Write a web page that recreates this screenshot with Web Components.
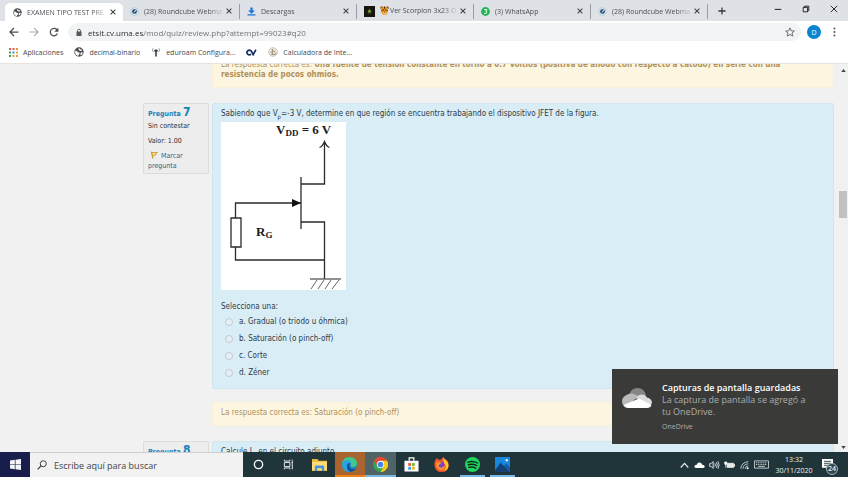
<!DOCTYPE html>
<html lang="es">
<head>
<meta charset="utf-8">
<title>EXAMEN TIPO TEST PRE</title>
<style>
html, body { margin: 0; height: 100%; overflow: hidden; }
body { background: #f1f1f1; }
</style>
</head>
<body>
<desktop-screen></desktop-screen>
<script>
const ICONS = {
  globe: ['0 0 16 16', '<circle cx="8" cy="8" r="7.5" fill="#4b4f54"/><path d="M2 6c2 0 3 1 4 2s3 0 3 2-2 2-2 4c-3 0-6-3-5-8zM8 2c2 0 1 2 3 2s2 1 1 2-3 0-4-1-1-3 0-3zM11 9c2-1 3 0 3 0-1 3-2 4-3 4s-1-3 0-4z" fill="#fff"/>'],
  roundcube: ['0 0 16 16', '<circle cx="8" cy="8" r="7.5" fill="#b9cfe2"/><path d="M8 2l5 3v6l-5 3-5-3V5z" fill="#e9f1f8"/><circle cx="8" cy="8" r="4.2" fill="#17375f"/><path d="M6 9l4-4 1 2-4 3z" fill="#d8e8f5"/>'],
  download: ['0 0 16 16', '<path d="M6 1h4v5h4l-6 6-6-6h4zM1 13h14v2H1z" fill="#1a73d8"/>'],
  film: ['0 0 16 16', '<path d="M0 0h16v16H0z" fill="#15170f"/><path d="M8 4l3 5H5z" fill="#8f9c3b"/><path d="M6 9h4v2H6z" fill="#55662c"/>'],
  tiger: ['0 0 16 16', '<circle cx="3" cy="3" r="2.7" fill="#9b5b1d"/><circle cx="13" cy="3" r="2.7" fill="#9b5b1d"/><path d="M2 4q6-5 12 0v6q-2 6-6 6t-6-6z" fill="#ef9920"/><path d="M7 1h2v4H7zM2 7l3 1-3 1zM14 7l-3 1 3 1z" fill="#44250c"/><circle cx="5.6" cy="7" r="1.1"/><circle cx="10.4" cy="7" r="1.1"/><path d="M6 11h4v2l-2 2-2-2z" fill="#f8d5a0"/><path d="M6.500 10h3L8 12z"/>'],
  whatsapp: ['0 0 16 16', '<circle cx="8" cy="8" r="7.8" fill="#1fb655"/><path d="M5.500 4.500h5L8 7.300q3 0 2.400 2.500-1 2.700-5 1.500" fill="none" stroke="#fff" stroke-width="1.700"/>'],
  close: ['0 0 10 10', '<path d="M1 1l8 8M9 1L1 9" stroke="#3c4043" stroke-width="1.700"/>'],
  plus: ['0 0 10 10', '<path d="M5 .5v9M.5 5h9" stroke="#35383b" stroke-width="1.600"/>'],
  min: ['0 0 10 10', '<path d="M1 5.500h8" stroke="#333" stroke-width="1.400"/>'],
  restore: ['0 0 10 10', '<path d="M1.500 3h5.500v5.500H1.500zM3 3V1.500h5.500V7H7" fill="none" stroke="#222" stroke-width="1.200"/>'],
  wclose: ['0 0 10 10', '<path d="M1 1l8 8M9 1L1 9" stroke="#222" stroke-width="1.200"/>'],
  back: ['0 0 16 16', '<path d="M15 8H2M8 1.500L1.500 8 8 14.500" fill="none" stroke="#4a4d51" stroke-width="2"/>'],
  forward: ['0 0 16 16', '<path d="M1 8h13M8 1.500L14.500 8 8 14.500" fill="none" stroke="#a9adb1" stroke-width="1.800"/>'],
  reload: ['0 0 16 16', '<path d="M13.500 10.500A6 6 0 1 1 12.500 4L14 6" fill="none" stroke="#4a4d51" stroke-width="2"/><path d="M15 1v6.500H8.500z" fill="#4a4d51"/>'],
  lock: ['0 0 12 16', '<path d="M1 6h10v9H1z" fill="#55585c"/><path d="M3 7V4.500a3 3 0 0 1 6 0V7" fill="none" stroke="#55585c" stroke-width="1.700"/>'],
  star: ['0 0 16 16', '<path d="M8 1.500l2 4.600 5 .4-3.800 3.200 1.200 4.800L8 12l-4.400 2.500 1.200-4.800L1 6.500l5-.4z" fill="none" stroke="#5a5e62" stroke-width="1.400"/>'],
  dots: ['0 0 4 16', '<g fill="#55585c"><circle cx="2" cy="2.500" r="1.600"/><circle cx="2" cy="8" r="1.600"/><circle cx="2" cy="13.500" r="1.600"/></g>'],
  apps: ['0 0 9 9', '<path d="M0 0h2v2H0zM3.500 0h2v2h-2z" fill="#e2574c"/><path d="M7 0h2v2H7z" fill="#e8933a"/><path d="M0 3.500h2v2H0z" fill="#3fa45b"/><path d="M3.500 3.500h2v2h-2z" fill="#4285d8"/><path d="M7 3.500h2v2H7zM3.500 7h2v2h-2zM7 7h2v2H7z" fill="#e0a52e"/><path d="M0 7h2v2H0z" fill="#3fa45b"/>'],
  eduroam: ['0 0 16 16', '<path d="M8 5v10M5.500 7q2.500-4 5 0" fill="none" stroke="#3d4145" stroke-width="2.600"/><path d="M3.500 2Q1 5 3.500 8M12.500 2q2.500 3 0 6" fill="none" stroke="#8b98ab" stroke-width="1.500"/>'],
  cv: ['0 0 20 12', '<path d="M9 3A4.200 4.200 0 1 0 9 9" fill="none" stroke="#152f63" stroke-width="3"/><path d="M9 2l4 8 5-9" fill="none" stroke="#152f63" stroke-width="3"/>'],
  calc: ['0 0 16 16', '<circle cx="8" cy="8" r="7" fill="#ece7dd" stroke="#b6ae9f"/><path d="M7 3v9M4 9l5-3 4 5M5 12h7" stroke="#94866d" stroke-width="1.400" fill="none"/>'],
  flag: ['0 0 16 16', '<path d="M2 2q5 1.500 12 1-3 2-3 5-3 1-6 0" fill="#f6e6b2" stroke="#dca52c" stroke-width="2.200"/><path d="M3 2l3 13" stroke="#cf9520" stroke-width="2.400"/>'],
  up: ['0 0 6 4', '<path d="M3 0l3 4H0z" fill="#444"/>'],
  down: ['0 0 6 4', '<path d="M0 0h6L3 4z" fill="#444"/>'],
  cloud: ['0 0 30 20', '<path d="M7 7Q9 0 15.500 0q6.500 0 8.500 7l-7 6z" fill="#868686"/><path d="M6.500 6q5-2 9.500 2.500L4 19.500Q0 17.500 0 13T6.500 6z" fill="#bababa"/><path d="M14 9.500Q16 6.500 20.500 6.500 24 7 25 9.500q5 1 5 5.500l-2 3z" fill="#dcdcdc"/><path d="M1.500 17L17 10.500 29.500 17q-1 3-4.500 3H6q-3 0-4.500-3z" fill="#fff"/>'],
  windows: ['0 0 16 16', '<path d="M0 2.200l7-1v6.300H0zM8 1l8-1v7.500H8zM0 8.500h7v6.300l-7-1zM8 8.500h8V16l-8-1z" fill="#f4f4f8"/>'],
  search: ['0 0 16 16', '<circle cx="10" cy="6" r="4.800" fill="none" stroke="#333" stroke-width="1.500"/><path d="M6.500 9.500L1 15" stroke="#333" stroke-width="1.700"/>'],
  cortana: ['0 0 16 16', '<circle cx="8" cy="8" r="6" fill="none" stroke="#fff" stroke-width="2"/>'],
  taskview: ['0 0 16 16', '<path d="M2 5h8v6H2zM2 1v2h8V1M2 15v-2h8v2M13.500 1v3M13.500 7v8" fill="none" stroke="#e8ecec" stroke-width="1.400"/><path d="M12.500 4.500h2v2h-2z" fill="#fff"/>'],
  folder: ['0 0 16 14', '<path d="M0 1h6l1 2h9v11H0z" fill="#f0b63c"/><path d="M0 4h16v9H0z" fill="#ffdc76"/><path d="M3 9q0-1 1-1h8q1 0 1 1v5h-2.500v-3h-5v3H3z" fill="#4695d4"/>'],
  edge: ['0 0 16 16', '<circle cx="8" cy="8" r="8" fill="#1b7fcb"/><path d="M0 7Q1 0 8 0q7.500 0 8 7 0 4-4.500 4-3 0-2-2.500Q10 5 6.500 4.500 2 4 0 7z" fill="#43c78c"/><path d="M0 8q1-5 6-4.500Q10 4 9.800 7 7 5.500 5.500 8.500 4.500 13 9 16 0 16 0 8z" fill="#2aa5dc"/><path d="M5.500 8.500Q4.500 14 9 15.800q3.500 0 6-3.300-6 2-7-2Q7 8 8.500 6.500 6 6 5.500 8.500z" fill="#124f92"/>'],
  chrome: ['0 0 16 16', '<circle cx="8" cy="8" r="8" fill="#35a453"/><path d="M1 4a8 8 0 0 1 14 0H8L5 10z" fill="#e94537"/><path d="M15 4a8 8 0 0 1-7 12l3.500-6L9 4z" fill="#fac81c"/><circle cx="8" cy="8" r="3.900" fill="#fff"/><circle cx="8" cy="8" r="3" fill="#4285e8"/>'],
  store: ['0 0 16 16', '<path d="M5.500 4V1h5v3" fill="none" stroke="#fff" stroke-width="1.300"/><path d="M.5 4h15v11.500H.5z" fill="#fff"/><path d="M4.500 6.500h3v3h-3z" fill="#ec5b34"/><path d="M8.500 6.500h3v3h-3z" fill="#77b72e"/><path d="M4.500 10.500h3v3h-3z" fill="#2f9fe0"/><path d="M8.500 10.500h3v3h-3z" fill="#f5b51c"/>'],
  firefox: ['0 0 16 16', '<path d="M1 4l2-3 2 2q2 0 3-1l2-2q1 2 3 3 3 2 2.500 6.500Q15 16 8 16T.5 9Q.3 6 1 4z" fill="#f4532f"/><path d="M10 0q1 3 3 4t2.500 5Q15 14 10 15q4-3 2-7-2-2-2-8z" fill="#ffc92e"/><circle cx="7.500" cy="8.500" r="3.600" fill="#7a45c9"/><path d="M2 6q3-2 6 0l-2 2q-2 1 0 3 3 1 6-2 0 5-5 5-5-1-5-8z" fill="#fd8c2a"/>'],
  spotify: ['0 0 16 16', '<circle cx="8" cy="8" r="8" fill="#1ed760"/><path d="M3 5.500q5.500-1.700 10.500.9M3.600 8.300q4.500-1.300 9 .9M4 11q4-1 7.500.8" fill="none" stroke="#10281a" stroke-width="1.500" stroke-linecap="round"/>'],
  photos: ['0 0 16 16', '<path d="M0 0h16v16H0z" fill="#1687dc"/><path d="M0 14l6-8 10 10H0z" fill="#153f70"/><path d="M9 10l3-3 4 4v5z" fill="#0f5ba4"/><circle cx="12.500" cy="3.500" r="1.300" fill="#dff1ff"/>'],
  chevron: ['0 0 12 12', '<path d="M1.500 9L6 4l4.500 5" fill="none" stroke="#e6eaea" stroke-width="1.500"/>'],
  traycloud: ['0 0 16 12', '<path d="M4 10.500Q.5 10.500.5 8T4 5.500Q5 2 8.500 2.500 11 3 12 5.500q3.500 0 3.500 2.500T13 10.500z" fill="#fff"/>'],
  sound: ['0 0 16 14', '<path d="M1 5h2l3-3v10L3 9H1z" fill="none" stroke="#eef1f1" stroke-width="1.300"/><path d="M8.500 4.500q1.500 2.500 0 5M10.800 3q2.500 4 0 8M13 1.500q3.400 5.500 0 11" fill="none" stroke="#dfe4e4" stroke-width="1.300"/>'],
  battery: ['0 0 16 12', '<path d="M4.500 3.500H14v6H4.500z" fill="#e6eaea" stroke="#fff"/><path d="M14.500 5h1.500v3h-1.500z" fill="#fff"/><path d="M1 1.500v2.500q0 1.500 1.500 1.500T4 4V1.500zM2.500 5v5" stroke="#fff" fill="#fff"/>'],
  wifi: ['0 0 16 16', '<path d="M2 14Q3 4 14 2.500M5.500 14Q6 7 14 6M9 14q.3-4 5-4.500" fill="none" stroke="#cfd6d6" stroke-width="1.400"/><circle cx="13" cy="13.200" r="1.600" fill="#fff"/>'],
  keyboard: ['0 0 22 12', '<path d="M.7.7h20.600v10.600H.7z" fill="none" stroke="#e0e5e5" stroke-width="1.200"/><path d="M3 3.500h16M3 6h16" stroke="#d6dcdc" stroke-width="1.300" stroke-dasharray="1.600 1"/><path d="M6 8.700h10" stroke="#d6dcdc" stroke-width="1.300"/>'],
  note: ['0 0 14 14', '<path d="M0 0h14v11H8l-3 3v-3H0z" fill="#fff"/><path d="M2.500 3h9M2.500 5.500h9M2.500 8h9" stroke="#233638" stroke-width="1.100"/>']
};

function define(name, html, setup) {
  customElements.define(name, class extends HTMLElement {
    constructor() {
      super();
      const template = document.createElement('template');
      template.innerHTML = `<style>
        * { box-sizing: border-box; }
        button { border: 0; padding: 0; margin: 0; background: none; color: inherit; font: inherit; display: inline-flex; align-items: center; justify-content: center; }
        a { color: inherit; text-decoration: none; }
        p, h2, h3 { margin: 0; font: inherit; }
      </style>` + html;
      this.attachShadow({ mode: 'open' }).append(template.content.cloneNode(true));
    }
    connectedCallback() { if (setup) setup.call(this, this.shadowRoot); }
  });
}

define('ui-icon', `<style>
  :host { display: inline-block; flex: none; width: 10px; height: 10px; }
  svg { display: block; width: 100%; height: 100%; }
</style><svg aria-hidden="true"></svg>`, function (root) {
  const [box, art] = ICONS[this.getAttribute('name')];
  const svg = root.querySelector('svg');
  svg.setAttribute('viewBox', box);
  svg.innerHTML = art;
});

define('browser-tab', `<style>
  :host { display: flex; box-sizing: border-box; align-items: center; flex: 0 1 117px; min-width: 0; height: 15px; padding: 0 6px 0 7px; border-right: 1px solid #9a9ea3; }
  :host([active]) { flex-basis: 118px; height: 18px; margin-left: 5px; background: #fff; border: 0; border-radius: 5px 5px 0 0; padding-left: 8px; }
  .select { flex: 1; min-width: 0; justify-content: flex-start; gap: 5px; overflow: hidden; height: 15px; mask-image: linear-gradient(90deg, #000 82%, transparent); }
  .title { white-space: nowrap; }
  .close { width: 8px; height: 12px; }
  .close ui-icon { width: 6px; height: 6px; }
</style>
<button class="select" role="tab"><slot name="icon"></slot><span class="title"><slot></slot></span></button>
<button class="close" aria-label="Cerrar"><ui-icon name="close"></ui-icon></button>`, function (root) {
  root.querySelector('.select').setAttribute('aria-selected', this.hasAttribute('active'));
});

define('tab-strip', `<style>
  :host { display: flex; align-items: flex-end; height: 21px; background: #dee1e6; color: #4d5156; }
  .tabs { flex: 0 1 708px; min-width: 0; display: flex; align-items: center; height: 20px; }
  browser-tab[active] { align-self: flex-end; }
  browser-tab ui-icon { width: 9px; height: 9px; }
  browser-tab .poster { width: 11px; height: 11px; }
  .tagged { display: inline-flex; align-items: center; gap: 1px; }
  .new { width: 28px; height: 21px; }
  .new ui-icon { width: 8px; height: 8px; }
  .window { margin-left: auto; display: flex; align-self: flex-start; }
  .window button { width: 28px; height: 18px; }
  .window ui-icon { width: 8px; height: 8px; }
</style>
<div class="tabs" role="tablist">
  <browser-tab active><ui-icon slot="icon" name="globe"></ui-icon>EXAMEN TIPO TEST PRE</browser-tab>
  <browser-tab><ui-icon slot="icon" name="roundcube"></ui-icon>(28) Roundcube Webma</browser-tab>
  <browser-tab><ui-icon slot="icon" name="download"></ui-icon>Descargas</browser-tab>
  <browser-tab><ui-icon slot="icon" class="poster" name="film"></ui-icon><span class="tagged"><ui-icon name="tiger"></ui-icon>Ver Scorpion 3x23 O</span></browser-tab>
  <browser-tab><ui-icon slot="icon" name="whatsapp"></ui-icon>(3) WhatsApp</browser-tab>
  <browser-tab><ui-icon slot="icon" name="roundcube"></ui-icon>(28) Roundcube Webma</browser-tab>
</div>
<button class="new" aria-label="Nueva pestaña"><ui-icon name="plus"></ui-icon></button>
<div class="window">
  <button aria-label="Minimizar"><ui-icon name="min"></ui-icon></button>
  <button aria-label="Restaurar"><ui-icon name="restore"></ui-icon></button>
  <button aria-label="Cerrar ventana"><ui-icon name="wclose"></ui-icon></button>
</div>`);

define('address-bar', `<style>
  :host { display: flex; align-items: center; height: 22px; padding: 0 4px; background: #fff; }
  .nav { width: 20px; height: 20px; }
  .nav ui-icon { width: 10px; height: 10px; }
  .field { flex: 1; display: flex; align-items: center; gap: 6px; height: 18px; margin-left: 4px; padding: 0 6px 0 8px; border-radius: 9px; background: #f1f3f4; }
  .field > ui-icon { width: 6px; height: 9px; }
  input { flex: 1; min-width: 0; height: 16px; border: 0; padding: 0; outline: 0; background: linear-gradient(90deg, #27292c 56px, #6a6e73 56px) text; -webkit-text-fill-color: transparent; color: #55595e; font: 8px "Open Sans", sans-serif; }
  .me { width: 14px; height: 14px; margin-left: 6px; border-radius: 50%; background: #0a84d0; color: #fff; font-size: 7px; }
  .more { width: 20px; height: 20px; margin-left: 3px; }
  .more ui-icon { width: 3px; height: 10px; }
</style>
<button class="nav" aria-label="Atrás"><ui-icon name="back"></ui-icon></button>
<button class="nav" aria-label="Adelante"><ui-icon name="forward"></ui-icon></button>
<button class="nav" aria-label="Volver a cargar"><ui-icon name="reload"></ui-icon></button>
<div class="field">
  <ui-icon name="lock"></ui-icon>
  <input type="text" aria-label="Dirección" value="etsit.cv.uma.es/mod/quiz/review.php?attempt=99023#q20">
  <button aria-label="Añadir a marcadores"><ui-icon name="star"></ui-icon></button>
</div>
<button class="me" aria-label="Perfil">D</button>
<button class="more" aria-label="Menú"><ui-icon name="dots"></ui-icon></button>`);

define('bookmarks-bar', `<style>
  :host { display: flex; box-sizing: border-box; align-items: center; gap: 11px; height: 21px; padding: 0 9px 2px; background: #fff; color: #44484c; border-bottom: 1px solid #e6e4dd; }
  a { display: flex; align-items: center; gap: 5px; white-space: nowrap; }
  .apps { width: 9px; height: 9px; }
  .cv { width: 11px; height: 7px; }
</style>
<a href="#apps"><ui-icon class="apps" name="apps"></ui-icon>Aplicaciones</a>
<a href="#decimal"><ui-icon name="globe"></ui-icon>decimal-binario</a>
<a href="#eduroam"><ui-icon name="eduroam"></ui-icon>eduroam Configura...</a>
<a href="#cv" aria-label="Campus virtual"><ui-icon class="cv" name="cv"></ui-icon></a>
<a href="#calculadora"><ui-icon name="calc"></ui-icon>Calculadora de Inte...</a>`);

define('question-info', `<style>
  :host { display: block; height: max-content; padding: 2px 4px; border: 1px solid #dcdcdc; border-radius: 1px; background: #ededed; color: #303030; font-size: 7px; line-height: 9px; }
  h3 { font-weight: bold; color: #1583ba; line-height: 13px; font-size: 7px; }
  h3 span { font-size: 12px; }
  p { line-height: 10px; }
  .grade { margin-top: 5px; }
  a { display: block; margin-top: 5px; color: #27678f; line-height: 10px; }
  ui-icon { width: 8px; height: 8px; margin: 0 3px 0 2px; vertical-align: -1px; }
</style>
<h3>Pregunta <span></span></h3>
<p>Sin contestar</p>
<p class="grade">Valor: 1.00</p>
<a href="#marcar"><ui-icon name="flag"></ui-icon>Marcar pregunta</a>`, function (root) {
  root.querySelector('h3 span').textContent = this.getAttribute('number');
});

define('question-body', `<style>
  :host { display: block; padding: 4px 8px 5px; border: 1px solid #cfe6ef; border-radius: 2px; background: #d9edf7; color: #2f3a42; line-height: 11px; }
</style><slot></slot>`);

define('answer-note', `<style>
  :host { display: block; padding: 5px 8px 7px; border: 1px solid #fbf0d6; border-radius: 2px; background: #fcf6e1; color: #b09059; line-height: 10px; }
</style><slot></slot>`);

define('jfet-circuit', `<style>
  :host { display: block; width: 125px; height: 168px; background: #fff; }
  svg { display: block; width: 100%; height: 100%; }
  text { font-family: "Liberation Serif", serif; font-weight: bold; font-size: 13px; fill: #1c1c1c; }
  .sub { font-size: 9px; }
</style>
<svg viewBox="0 0 125 168" role="img" aria-label="Circuito con transistor JFET">
  <text x="55" y="12">V<tspan class="sub" dy="2">DD</tspan><tspan dy="-2"> = 6 V</tspan></text>
  <text x="35" y="114">R<tspan class="sub" dy="2">G</tspan></text>
  <g fill="none" stroke="#2b2b2b" stroke-width="1.300">
    <path d="M80 55v52M80 62h23.500V20M98.500 25.500q3-1 5-6 2 5 5 6M80 100h23.500v57M80 81H14.500v15M10 96h10v29H10zM14.500 125v13h89"/>
    <path d="M89 157h31" stroke="#555"/>
    <path d="M96 158l-6 9M103 158l-6 9M110 158l-6 9M118 158l-7 9" stroke="#666" stroke-width="1"/>
  </g>
  <path d="M71 77l9 4-9 4z" fill="#111"/>
</svg>`);

define('answer-list', `<style>
  :host { display: block; }
  fieldset { margin: 0; padding: 0; border: 0; }
  legend { padding: 0; line-height: 11px; }
  label { display: flex; align-items: center; gap: 6px; height: 17px; padding-left: 4px; }
  .options { padding-top: 1px; }
  input { appearance: none; width: 8px; height: 8px; margin: 0; border: 1px solid #c0cbd0; border-radius: 50%; background: #e6eff3; }
</style>
<fieldset><legend>Selecciona una:</legend><div class="options">
<label><input type="radio" name="q7" disabled>a. Gradual (o triodo u óhmica)</label>
<label><input type="radio" name="q7" disabled>b. Saturación (o pinch-off)</label>
<label><input type="radio" name="q7" disabled>c. Corte</label>
<label><input type="radio" name="q7" disabled>d. Zéner</label>
</div></fieldset>`);

define('quiz-review', `<style>
  :host { display: flex; min-height: 0; overflow: hidden; background: #f1f1f1; font-family: "DejaVu Sans Condensed", "DejaVu Sans", sans-serif; font-size: 8px; }
  main { flex: 1; min-width: 0; overflow: hidden; padding-right: 4px; }
  .scrolled { margin-top: -10px; padding-left: 143px; display: grid; grid-template-columns: 66px minmax(0, 1fr); column-gap: 3px; row-gap: 15px; }
  .content { display: grid; row-gap: 13px; }
  .scrollbar { flex: none; width: 10px; display: flex; flex-direction: column; align-items: center; padding: 5px 0 3px; }
  .scrollbar ui-icon { width: 5px; height: 3px; }
  .thumb { width: 8px; height: 27px; background: #c1c1c1; }
  .before { flex: 118; }
  .after { flex: 227; }
  sub { font-size: 6px; line-height: 0; }
  b { font-weight: bold; }
  jfet-circuit { margin-top: 3px; }
  answer-list { margin-top: 11px; padding-bottom: 2px; }
</style>
<main><div class="scrolled">
  <span></span>
  <answer-note>La respuesta correcta es: <b>Una fuente de tensión constante en torno a 0.7 Voltios (positiva de ánodo con respecto a cátodo) en serie con una resistencia de pocos ohmios.</b></answer-note>
  <question-info number="7"></question-info>
  <div class="content">
    <question-body>
      <div>Sabiendo que V<sub>p</sub>=-3 V, determine en que región se encuentra trabajando el dispositivo JFET de la figura.</div>
      <jfet-circuit></jfet-circuit>
      <answer-list></answer-list>
    </question-body>
    <answer-note>La respuesta correcta es: Saturación (o pinch-off)</answer-note>
  </div>
  <question-info number="8"></question-info>
  <question-body>Calcule I<sub>D</sub> en el circuito adjunto.</question-body>
</div></main>
<div class="scrollbar"><ui-icon name="up"></ui-icon><span class="before"></span><span class="thumb"></span><span class="after"></span><ui-icon name="down"></ui-icon></div>`);

define('toast-notice', `<style>
  :host { position: absolute; right: 10px; bottom: 33px; box-sizing: border-box; width: 226px; display: flex; gap: 10px; padding: 13px 24px 12px 10px; background: #3a3a38; color: #adadab; font-size: 9px; line-height: 12px; }
  ui-icon { width: 30px; height: 20px; margin-top: 6px; }
  h2 { font-weight: 600; color: #fff; }
  .app { margin-top: 4px; font-size: 7px; line-height: 10px; }
</style>
<ui-icon name="cloud"></ui-icon>
<div><h2>Capturas de pantalla guardadas</h2><p>La captura de pantalla se agregó a tu OneDrive.</p><p class="app">OneDrive</p></div>`);

define('task-bar', `<style>
  :host { display: flex; height: 25px; background: #20353a; color: #eef1f1; }
  .start { width: 30px; background: #191d4b; }
  .start ui-icon { width: 11px; height: 11px; }
  .search { flex: 0 1 213px; display: flex; align-items: center; gap: 7px; padding-left: 7px; background: #f2f2f2; border-top: 1px solid #cfcfcf; }
  input { flex: 1; min-width: 0; border: 0; padding: 0; outline: 0; background: none; color: #444; font: 9px "Open Sans", sans-serif; }
  input::placeholder { color: #444; opacity: 1; }
  .apps { display: flex; flex: 0 1 275px; }
  .apps button { flex: 1; border-top: 2px solid transparent; border-bottom: 2px solid transparent; }
  .apps ui-icon { width: 15px; height: 15px; }
  .apps .small ui-icon { width: 11px; height: 11px; }
  .apps .edge { background: #a9652f; border-color: #a9652f #a9652f #f08019; }
  .apps .current { background: #506365; border-color: #506365 #506365 #76b9e8; }
  .apps .open { background: linear-gradient(#76b9e8, #76b9e8) 50% 100% / 25px 2px no-repeat border-box; }
  .tray { margin-left: auto; display: flex; align-items: center; gap: 4px; }
  .tray > button > ui-icon { width: 11px; height: 10px; }
  .tray .keys ui-icon { width: 15px; height: 9px; }
  .clock { width: 42px; flex-direction: column; line-height: 11px; }
  .alerts { width: 29px; height: 25px; position: relative; }
  .tray > .alerts > ui-icon { width: 11px; height: 11px; margin-right: 12px; }
  .badge { position: absolute; right: 10px; bottom: 2px; width: 12px; height: 12px; border-radius: 50%; background: #33474a; border: 1px solid #a7b0b1; line-height: 10px; font-weight: 600; text-align: center; }
</style>
<button class="start" aria-label="Inicio"><ui-icon name="windows"></ui-icon></button>
<label class="search"><ui-icon name="search"></ui-icon><input type="text" aria-label="Buscar" placeholder="Escribe aquí para buscar"></label>
<div class="apps">
  <button class="small" aria-label="Cortana"><ui-icon name="cortana"></ui-icon></button>
  <button class="small" aria-label="Vista de tareas"><ui-icon name="taskview"></ui-icon></button>
  <button aria-label="Explorador"><ui-icon name="folder"></ui-icon></button>
  <button class="edge" aria-label="Edge"><ui-icon name="edge"></ui-icon></button>
  <button class="current" aria-label="Chrome"><ui-icon name="chrome"></ui-icon></button>
  <button aria-label="Tienda"><ui-icon name="store"></ui-icon></button>
  <button aria-label="Firefox"><ui-icon name="firefox"></ui-icon></button>
  <button class="open" aria-label="Spotify"><ui-icon name="spotify"></ui-icon></button>
  <button class="open" aria-label="Fotos"><ui-icon name="photos"></ui-icon></button>
</div>
<div class="tray">
  <button aria-label="Iconos ocultos"><ui-icon name="chevron"></ui-icon></button>
  <button aria-label="OneDrive"><ui-icon name="traycloud"></ui-icon></button>
  <button aria-label="Volumen"><ui-icon name="sound"></ui-icon></button>
  <button aria-label="Batería"><ui-icon name="battery"></ui-icon></button>
  <button aria-label="Red"><ui-icon name="wifi"></ui-icon></button>
  <button class="keys" aria-label="Teclado"><ui-icon name="keyboard"></ui-icon></button>
  <button class="clock"><span>13:32</span><span>30/11/2020</span></button>
  <button class="alerts" aria-label="Notificaciones"><ui-icon name="note"></ui-icon><span class="badge">24</span></button>
</div>`);

define('desktop-screen', `<style>
  :host { display: grid; grid-template-rows: auto auto auto minmax(0, 1fr) auto; height: 100%; position: relative; overflow: hidden; font: 7px "Open Sans", sans-serif; }
</style>
<tab-strip></tab-strip>
<address-bar></address-bar>
<bookmarks-bar></bookmarks-bar>
<quiz-review></quiz-review>
<task-bar></task-bar>
<toast-notice></toast-notice>`);
</script>
</body>
</html>
